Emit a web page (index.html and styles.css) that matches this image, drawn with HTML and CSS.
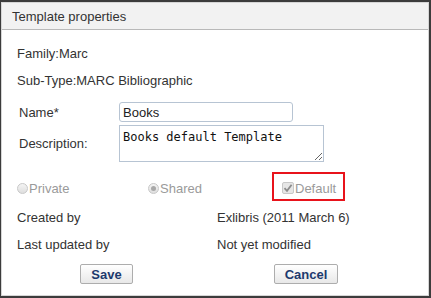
FILE: index.html
```html
<!DOCTYPE html>
<html>
<head>
<meta charset="utf-8">
<link rel="stylesheet" href="styles.css">
</head>
<body>
<div class="dialog">
  <div class="inner">
    <div class="header">Template properties</div>
    <div class="content">
      <div class="line first">Family:Marc</div>
      <div class="line">Sub-Type:MARC Bibliographic</div>
      <div class="fields">
        <label class="lbl name-lbl">Name*</label>
        <input class="text-input" type="text" value="Books">
        <label class="lbl desc-lbl">Description:</label>
        <textarea class="textarea">Books default Template</textarea>
      </div>
      <div class="options">
        <label class="opt opt-private"><span class="radio"></span>Private</label>
        <label class="opt opt-shared"><span class="radio checked"></span>Shared</label>
        <div class="highlight">
          <label class="opt"><span class="check"><svg width="10" height="10" viewBox="0 0 10 10"><path d="M1.5 5.2 L4 7.8 L8.6 1.8" fill="none" stroke="#8c8c8c" stroke-width="1.8"/></svg></span>Default</label>
        </div>
      </div>
      <div class="info">
        <div>Created by</div><div>Exlibris (2011 March 6)</div>
        <div>Last updated by</div><div>Not yet modified</div>
      </div>
      <div class="buttons">
        <button class="btn save">Save</button>
        <button class="btn cancel">Cancel</button>
      </div>
    </div>
  </div>
</div>
</body>
</html>
```
FILE: styles.css
```css
html, body {
  margin: 0;
  padding: 0;
  background: #fff;
}
.dialog {
  width: 431px;
  height: 298px;
  box-sizing: border-box;
  border: 2px solid #3c3c3c;
  border-left-width: 1px;
  font-family: "Liberation Sans", Arial, sans-serif;
  font-size: 13px;
  color: #333;
}
.inner {
  height: 100%;
  box-sizing: border-box;
  border: 1px solid #d6d6d6;
}
.header {
  height: 27px;
  box-sizing: border-box;
  background: #f2f2f2;
  border-bottom: 1px solid #b9b9b9;
  padding: 6px 0 0 10px;
  font-size: 13px;
  color: #333;
}
.content {
  padding-left: 15px;
}
.line {
  height: 27px;
  line-height: 27px;
}
.line.first {
  margin-top: 10px;
}
.fields {
  display: grid;
  grid-template-columns: 102px auto;
  row-gap: 3px;
  align-items: center;
  margin-top: 8px;
}
.lbl {
  padding-left: 2px;
}
.text-input {
  width: 174px;
  height: 20px;
  box-sizing: border-box;
  border: 1px solid #b7c4d3;
  border-radius: 3px;
  padding: 0 3px;
  font-family: "Liberation Sans", Arial, sans-serif;
  font-size: 13px;
  color: #222;
  margin: 0;
  outline: none;
}
.textarea {
  width: 205px;
  height: 37px;
  box-sizing: border-box;
  border: 1px solid #b7c4d3;
  padding: 4px 3px 0;
  font-family: "DejaVu Sans Mono", "Liberation Mono", monospace;
  font-size: 12px;
  line-height: 15px;
  color: #111;
  margin: 0;
  outline: none;
}
.options {
  display: flex;
  align-items: flex-start;
  height: 29px;
  margin-top: 10px;
  color: #9a9a9a;
}
.opt {
  display: flex;
  align-items: center;
}
.opt-private,
.opt-shared {
  padding-top: 9px;
}
.opt-private {
  width: 131px;
}
.opt-shared {
  width: 124px;
}
.radio {
  width: 11px;
  height: 11px;
  box-sizing: border-box;
  border-radius: 50%;
  border: 1px solid #c8c8c8;
  background: linear-gradient(#f4f4f4, #dedede);
  margin-right: 1px;
  position: relative;
}
.radio.checked::after {
  content: "";
  position: absolute;
  left: 2px;
  top: 2px;
  width: 5px;
  height: 5px;
  border-radius: 50%;
  background: #a8a8a8;
}
.highlight {
  border: 2px solid #e8131b;
  height: 29px;
  box-sizing: border-box;
  width: 73px;
  display: flex;
  align-items: center;
  padding: 3px 0 0 8px;
}
.check {
  width: 12px;
  height: 12px;
  box-sizing: border-box;
  border: 1px solid #c8c8c8;
  border-radius: 2px;
  background: #e6e6e6;
  display: flex;
  align-items: center;
  justify-content: center;
  margin-right: 1px;
}
.info {
  display: grid;
  grid-template-columns: 200px auto;
  grid-auto-rows: 27px;
  align-items: center;
  margin-top: 3px;
  padding-left: 0;
}
.buttons {
  display: flex;
  margin-top: 6px;
  padding-left: 63px;
  gap: 141px;
}
.btn {
  height: 20px;
  box-sizing: border-box;
  border: 1px solid #adadad;
  border-radius: 2px;
  background: linear-gradient(#ffffff, #e8e8e8);
  font-family: "Liberation Sans", Arial, sans-serif;
  font-weight: bold;
  font-size: 13px;
  color: #1d3a6e;
  padding: 0;
  margin: 0;
}
.save {
  width: 53px;
}
.cancel {
  width: 64px;
}
```
